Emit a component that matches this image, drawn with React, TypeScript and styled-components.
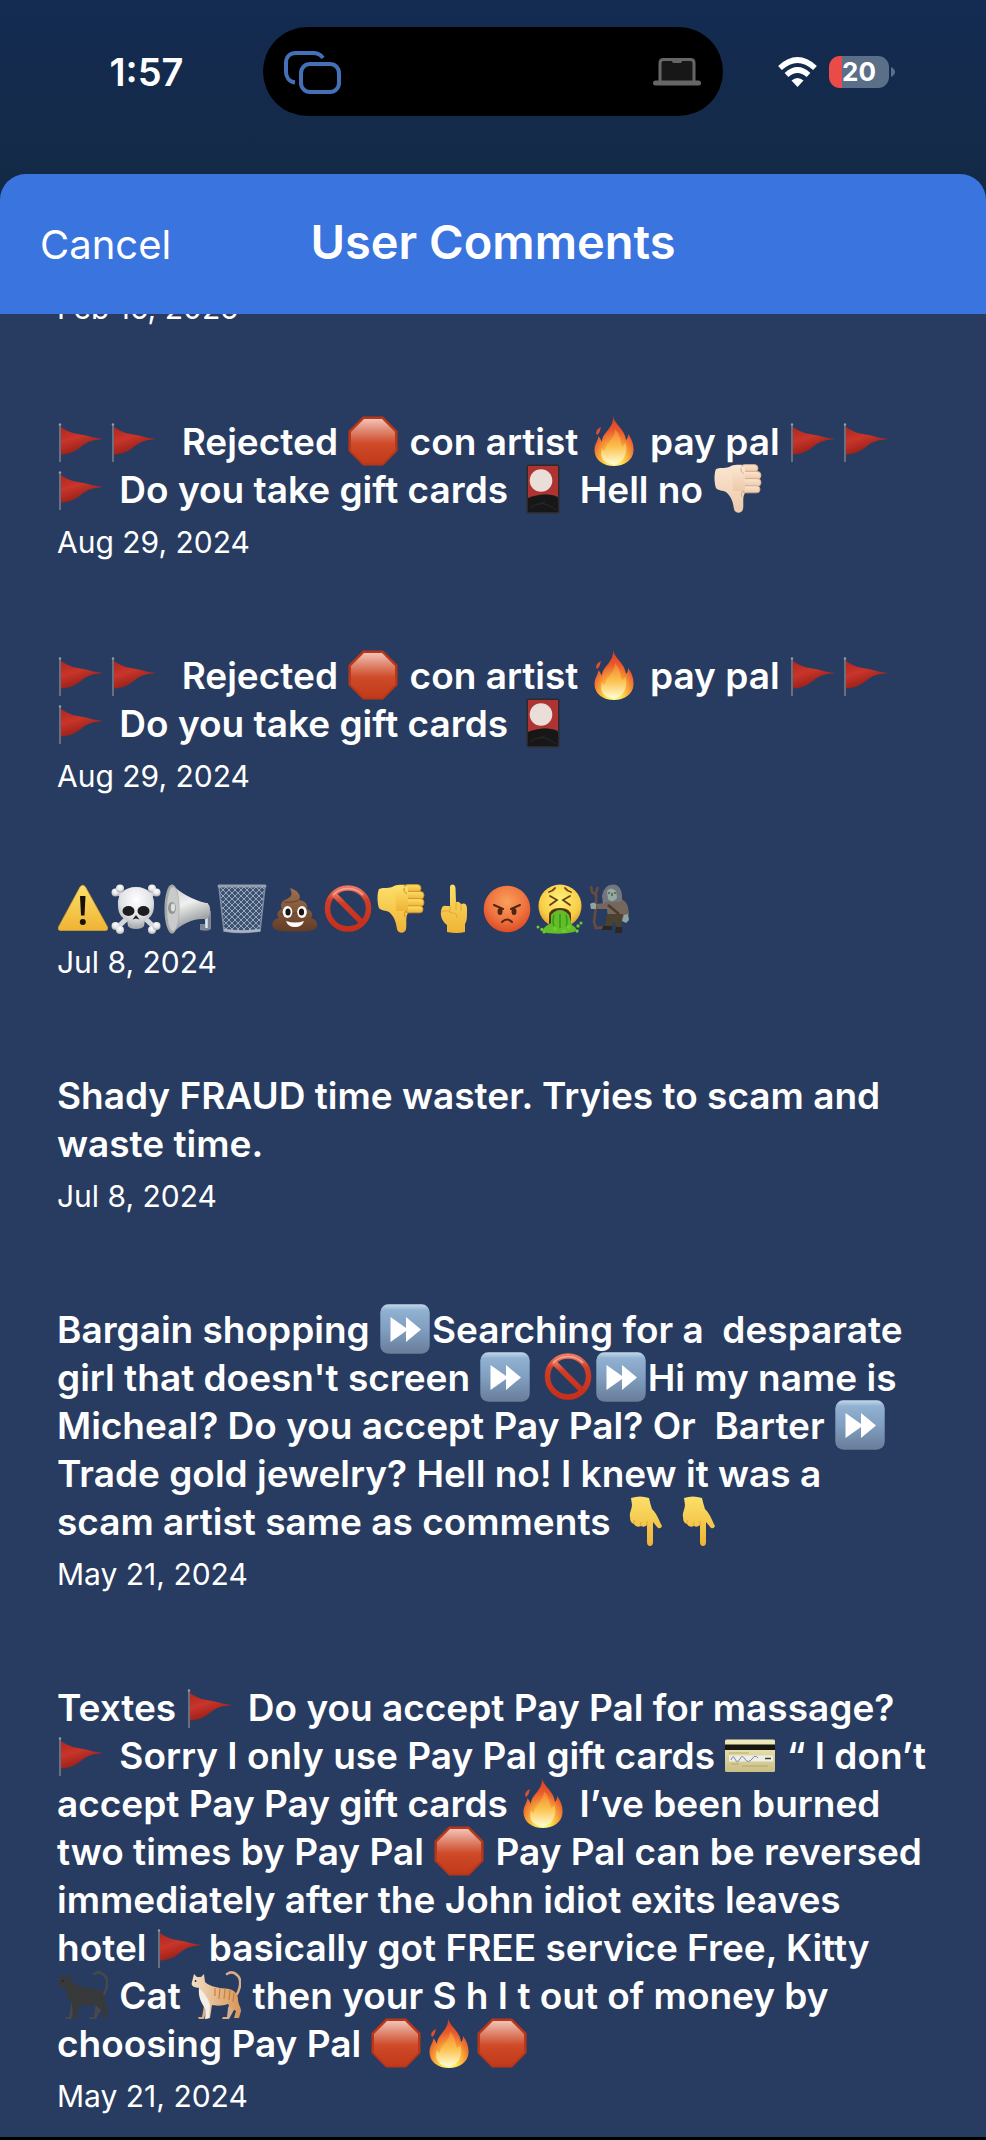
import React from "react";
import styled, { createGlobalStyle } from "styled-components";

const GlobalStyle = createGlobalStyle`
  *, *::before, *::after { box-sizing: border-box; }
  body {
    margin: 0;
    background: #283c61;
    color: #fff;
    font-family: Inter, "Liberation Sans", sans-serif;
  }
`;

const Screen = styled.div`
  display: flex;
  flex-direction: column;
  min-height: 100vh;
  background: linear-gradient(#142b52, #132a47 173px);
  border-bottom: 3px solid #000;
`;

const StatusBar = styled.div`
  display: grid;
  grid-template-columns: 1fr auto 1fr;
  padding: 27px 0 58px;
`;

const Time = styled.time`
  align-self: center;
  justify-self: center;
  padding-left: 30px;
  font-size: 38px;
  font-weight: 600;
  line-height: 48px;
`;

const Island = styled.div`
  display: flex;
  align-items: center;
  justify-content: space-between;
  width: 460px;
  height: 89px;
  padding: 0 22px 0 20px;
  border-radius: 45px;
  background: #000;
`;

const Indicators = styled.div`
  display: flex;
  align-items: center;
  gap: 12px;
  padding-left: 55px;
`;

const Battery = styled.div`
  display: flex;
  align-items: center;
  gap: 2px;
`;

const BatteryBody = styled.div`
  width: 60px;
  height: 32px;
  border-radius: 11px;
  background: linear-gradient(90deg, #ea4b48 13px, #5c6f89 13px);
  font-size: 26px;
  font-weight: 700;
  line-height: 32px;
  text-align: center;
`;

const Sheet = styled.main`
  display: flex;
  flex: 1;
  flex-direction: column;
  overflow: hidden;
  border-radius: 26px 26px 0 0;
  background: #283c61;
`;

const Header = styled.header`
  position: relative;
  z-index: 1;
  display: grid;
  grid-template-columns: 1fr auto 1fr;
  align-items: baseline;
  height: 140px;
  padding: 36px 40px 0;
  background: #3a74df;
`;

const CancelButton = styled.button`
  justify-self: start;
  padding: 0;
  border: 0;
  background: none;
  color: #fff;
  font: 400 40px/60px Inter, "Liberation Sans", sans-serif;
  cursor: pointer;
`;

const Title = styled.h1`
  margin: 0;
  font-size: 47px;
  font-weight: 600;
  line-height: 64px;
`;

const CommentList = styled.ul`
  margin: -26px 0 0;
  padding: 0 57px;
  list-style: none;
`;

const CommentItem = styled.li`
  padding-bottom: 90px;

  &:last-child {
    padding-bottom: 20px;
  }
`;

const CommentText = styled.p`
  margin: 0 0 8px;
  font-size: 37px;
  font-weight: 600;
  line-height: 48px;
  white-space: pre-wrap;
`;

const CommentDate = styled.time`
  display: block;
  font-size: 30px;
  line-height: 40px;
`;

const Glyph = styled.svg`
  width: 50px;
  height: 50px;
  margin: -6px 2px -6px 1px;
  vertical-align: -5px;
`;

const SharedDefs = styled.svg`
  position: absolute;
  width: 0;
  height: 0;
`;

const Gradients = () => (
  <SharedDefs aria-hidden="true">
    <defs>
      <linearGradient id="flag" x1="0" y1="0" x2="0.5" y2="1">
        <stop offset="0" stopColor="#b3261d" />
        <stop offset="0.45" stopColor="#c8352b" />
        <stop offset="1" stopColor="#8f1b13" />
      </linearGradient>
      <linearGradient id="stop" x1="0" y1="0" x2="0" y2="1">
        <stop offset="0" stopColor="#f2c3b7" />
        <stop offset="0.25" stopColor="#e08a73" />
        <stop offset="0.55" stopColor="#ce4a28" />
        <stop offset="1" stopColor="#c23a1a" />
      </linearGradient>
      <radialGradient id="fire" cx="0.5" cy="0.92" r="0.9">
        <stop offset="0" stopColor="#fffbc8" />
        <stop offset="0.2" stopColor="#fde84f" />
        <stop offset="0.42" stopColor="#f9a83a" />
        <stop offset="0.7" stopColor="#ea5a2c" />
        <stop offset="1" stopColor="#d83c25" />
      </radialGradient>
      <linearGradient id="core" x1="0" y1="0" x2="0" y2="1">
        <stop offset="0" stopColor="#f48b35" stopOpacity="0.7" />
        <stop offset="0.5" stopColor="#fbc04c" />
        <stop offset="1" stopColor="#fffcd0" />
      </linearGradient>
      <linearGradient id="yellow" x1="0" y1="0" x2="0" y2="1">
        <stop offset="0" stopColor="#fce06a" />
        <stop offset="1" stopColor="#efb334" />
      </linearGradient>
      <linearGradient id="light" x1="0" y1="0" x2="0" y2="1">
        <stop offset="0" stopColor="#fbe6d0" />
        <stop offset="1" stopColor="#ecc9aa" />
      </linearGradient>
      <radialGradient id="bone" cx="0.5" cy="0.3" r="0.7">
        <stop offset="0" stopColor="#ffffff" />
        <stop offset="0.6" stopColor="#e2e3e6" />
        <stop offset="1" stopColor="#a5a8ae" />
      </radialGradient>
      <linearGradient id="horn" x1="0" y1="0" x2="0.3" y2="1">
        <stop offset="0" stopColor="#c6c7c8" />
        <stop offset="0.45" stopColor="#f0f0f0" />
        <stop offset="1" stopColor="#85878a" />
      </linearGradient>
      <linearGradient id="poop" x1="0" y1="0" x2="0" y2="1">
        <stop offset="0" stopColor="#a0714f" />
        <stop offset="1" stopColor="#633c25" />
      </linearGradient>
      <linearGradient id="ban" x1="0" y1="0" x2="0" y2="1">
        <stop offset="0" stopColor="#f0765f" />
        <stop offset="0.3" stopColor="#cf3d26" />
        <stop offset="1" stopColor="#c92f1a" />
      </linearGradient>
      <radialGradient id="angry" cx="0.5" cy="0.35" r="0.65">
        <stop offset="0" stopColor="#f9a05a" />
        <stop offset="0.6" stopColor="#ef7440" />
        <stop offset="1" stopColor="#de4c24" />
      </radialGradient>
      <radialGradient id="face" cx="0.5" cy="0.35" r="0.65">
        <stop offset="0" stopColor="#fff07a" />
        <stop offset="0.7" stopColor="#f8ce45" />
        <stop offset="1" stopColor="#e5a02b" />
      </radialGradient>
      <linearGradient id="forward" x1="0" y1="0" x2="0" y2="1">
        <stop offset="0" stopColor="#c3d8ea" />
        <stop offset="0.12" stopColor="#91b1d1" />
        <stop offset="0.5" stopColor="#819fc1" />
        <stop offset="1" stopColor="#687d99" />
      </linearGradient>
      <linearGradient id="card" x1="0" y1="0" x2="0" y2="1">
        <stop offset="0" stopColor="#f1ecbd" />
        <stop offset="1" stopColor="#cabf83" />
      </linearGradient>
      <linearGradient id="ginger" x1="0" y1="0" x2="1" y2="0">
        <stop offset="0" stopColor="#f2dfca" />
        <stop offset="0.5" stopColor="#e6b98a" />
        <stop offset="1" stopColor="#d99557" />
      </linearGradient>
      <pattern id="mesh" width="6" height="6" patternUnits="userSpaceOnUse">
        <path d="M0 0L6 6M6 0L0 6" stroke="#9fb2c9" strokeWidth="0.9" />
      </pattern>
    </defs>
  </SharedDefs>
);

const ThumbDown = ({ fill, shade }: { fill: string; shade: string }) => (
  <g fill={`url(#${fill})`}>
    <path d="M3 5C8 3 13 5 18 2C24 0 30 1 34 2L38 27L32 29C29 33 31 40 30 45C29 50 22 50 21 45C20 39 19 33 13 28C10 26 5 27 3 24C1 19 1 9 3 5Z" />
    <g stroke={shade} strokeWidth="0.9">
      <rect x="28" y="0.6" width="17" height="7.4" rx="3.7" />
      <rect x="28" y="7.4" width="20" height="7.8" rx="3.9" />
      <rect x="28" y="14.6" width="20" height="7.8" rx="3.9" />
      <rect x="29" y="21.8" width="18" height="7" rx="3.5" />
    </g>
    <path d="M19 3H32V27H20Z" />
    <path d="M31 10Q27 8 28 4M31 27Q27 28 29 33" fill="none" stroke={shade} />
  </g>
);

const CatShape = ({ body, back }: { body: string; back: string }) => (
  <>
    <path d="M44 27C50 19 51 9 46 5C43 2 39 2 36 4" fill="none" stroke={back} strokeWidth="2.6" strokeLinecap="round" />
    <path d="M14 30L11 47H7L8 49H13L18 33ZM40 30L37 38L36 47H32L31 49H38L44 38Z" fill={back} />
    <path d="M3 4L6 7H10L13 4L14 12C19 17 29 18 38 19C43 20 47 24 47 29C47 34 50 37 50 41L48 48H43L45 41C42 39 39 37 37 34C32 36 25 36 21 35L19 48L14 49L15 47L14 33C9 29 8 23 8 18L3 17C1 16 0 14 1 12Z" fill={body} />
    <circle cx="4.6" cy="11" r="0.9" fill="#222" />
  </>
);

const EMOJI: Record<string, { label: string; art: React.ReactNode }> = {
  "🚩": {
    label: "red flag",
    art: (
      <>
        <path d="M3 11C12 18 22 18 30 20C36 22 40 22 45 23C36 24 30 25 24 30C17 36 11 38 3 38.5Z" fill="url(#flag)" />
        <path d="M2 8.5V46" stroke="#83858c" strokeWidth="1.4" />
        <circle cx="2" cy="8.5" r="1.2" fill="#9b9ca2" />
      </>
    ),
  },
  "🛑": {
    label: "stop sign",
    art: (
      <>
        <path d="M15 0.5H35L49.5 15V35L35 49.5H15L0.5 35V15Z" fill="#b93619" />
        <path d="M16 3H34L47 16V34.5L34.5 47.5H15.5L3 34.5V16Z" fill="url(#stop)" />
      </>
    ),
  },
  "🔥": {
    label: "fire",
    art: (
      <>
        <path d="M24 0C25 8 36 13 37 24C39 22 39 20 39 18C43 23 45 29 44.5 35C44 44 35 50 25 50C14 50 5.5 44 5.5 34C5.5 28 9 25 9.5 20C11 22 12 24 13 26C13 16 25 13 24 0Z" fill="url(#fire)" />
        <path d="M8 19C6 16 8 13 12 11C11 14 11 17 8 19Z" fill="#e0502d" />
        <path d="M26 13C32 20 31 26 33 30C35 29 36 28 36 26C40 36 34 48 25 48C15 48 10 41 13 32C14 34 15 34 16 35C16 27 26 24 26 13Z" fill="url(#core)" />
      </>
    ),
  },
  "🎴": {
    label: "flower playing cards",
    art: (
      <>
        <rect x="8.5" y="0.5" width="33" height="49" rx="2" fill="#2e292b" />
        <path d="M10 2H40V33C29 28 21 32 10 34Z" fill="#ad3432" />
        <circle cx="23" cy="16.5" r="11.3" fill="#e9dfd8" />
        <path d="M10 34C21 30 31 29 40 34V48H10Z" fill="#171718" />
        <path d="M12 44Q24 34 38 46M22 40L27 38" fill="none" stroke="#28292a" />
      </>
    ),
  },
  "👎🏻": { label: "thumbs down, light skin tone", art: <ThumbDown fill="light" shade="#d3aa8a" /> },
  "👎": { label: "thumbs down", art: <ThumbDown fill="yellow" shade="#cf8f26" /> },
  "⚠️": {
    label: "warning",
    art: (
      <>
        <path d="M22 3Q24.8 -0.5 27.5 3L49.5 43Q50.5 46.5 47 46.5H3Q-0.5 46.5 0.5 43Z" fill="url(#yellow)" stroke="#d9a62b" strokeWidth="0.7" />
        <path d="M22 12H27.5L26.5 31.5H23Z" fill="#17130a" />
        <circle cx="24.8" cy="38" r="3" fill="#17130a" />
      </>
    ),
  },
  "☠️": {
    label: "skull and crossbones",
    art: (
      <>
        <g stroke="#d5d7db" strokeWidth="5" strokeLinecap="round">
          <path d="M6 7L44 44M44 7L6 44" />
        </g>
        <g fill="url(#bone)">
          <circle cx="4.5" cy="8.5" r="4" /><circle cx="9" cy="4.5" r="4" />
          <circle cx="41" cy="4.5" r="4" /><circle cx="45.5" cy="8.5" r="4" />
          <circle cx="4.5" cy="42" r="4" /><circle cx="9" cy="46" r="4" />
          <circle cx="41" cy="46" r="4" /><circle cx="45.5" cy="42" r="4" />
          <path d="M25 3C37 3 44 11 43 21C43 29 40 34 34 36L33 42C31 46 19 46 17 42L16 36C10 34 7 29 7 21C6 11 13 3 25 3Z" />
        </g>
        <ellipse cx="17.5" cy="27" rx="6" ry="5" fill="#1d1d20" />
        <ellipse cx="32.5" cy="27" rx="6" ry="5" fill="#1d1d20" />
        <path d="M25 31L28.5 35.5L25 34.5L21.5 35.5Z" fill="#1d1d20" />
        <path d="M20 40V44M25 41V45M30 40V44" stroke="#a6a8ad" />
      </>
    ),
  },
  "📢": {
    label: "loudspeaker",
    art: (
      <>
        <path d="M34 27H47V45Q44 48 36 46V40H41V34H34Z" fill="#7d8794" />
        <path d="M42.5 19V44" stroke="#d8e9f7" strokeWidth="2.5" />
        <path d="M8 0.5C16 9 29 16 42 19Q47 20 46 29Q45 36 40 35C30 34 17 40 8 49.5Z" fill="url(#horn)" />
        <ellipse cx="8" cy="25" rx="7.5" ry="24.5" fill="#a6a7a8" />
        <ellipse cx="9" cy="25" rx="6" ry="22" fill="#c9caca" />
        <ellipse cx="8" cy="24" rx="4" ry="6" fill="#929394" />
        <ellipse cx="9" cy="23.5" rx="2.2" ry="4" fill="#dedede" />
      </>
    ),
  },
  "🗑️": {
    label: "wastebasket",
    art: (
      <>
        <path d="M2 3H48L43 48H7Z" fill="#3f5370" />
        <path d="M2 3H48L43 48H7Z" fill="url(#mesh)" />
        <path d="M2 3L7 47Q25 50 43 47L48 3" fill="none" stroke="#7c8ba0" strokeWidth="1.5" />
        <rect x="0.5" y="0.5" width="49" height="3" rx="1.5" fill="#95a1b0" />
        <path d="M7 46Q25 49 43 46" fill="none" stroke="#a9b3c1" strokeWidth="2.5" />
      </>
    ),
  },
  "💩": {
    label: "pile of poo",
    art: (
      <>
        <path d="M20 4C27 6 32 11 29 16C36 17 38 21 37 25C43 27 43 32 41 34C49 36 49 45 43 46C34 48 16 48 7 46C0 44 1 35 9 34C5 30 9 26 12 25C9 20 13 16 17 15C23 12 22 9 20 4Z" fill="url(#poop)" />
        <path d="M14 18Q24 19 29 16M10 30Q26 31 37 25" fill="none" stroke="#62402b" />
        <ellipse cx="17.5" cy="28" rx="4.8" ry="6" fill="#fff" />
        <ellipse cx="32" cy="28" rx="4.8" ry="6" fill="#fff" />
        <ellipse cx="18" cy="28" rx="2.6" ry="3.6" fill="#1b1512" />
        <ellipse cx="31.5" cy="28" rx="2.6" ry="3.6" fill="#1b1512" />
        <path d="M16 37Q25 40 34 37Q32 43 25 43Q18 43 16 37Z" fill="#fff" />
      </>
    ),
  },
  "🚫": {
    label: "prohibited",
    art: (
      <>
        <g fill="none" stroke="url(#ban)" strokeWidth="5.5">
          <circle cx="25" cy="24.5" r="20.5" />
          <path d="M10.5 10L39.5 39" />
        </g>
        <path d="M10 11A20.5 20.5 0 0 1 40 11" fill="none" stroke="#f5a496" strokeWidth="1.6" />
      </>
    ),
  },
  "🖕": {
    label: "middle finger",
    art: (
      <>
        <path d="M21 22V3Q21 0.5 23.5 0.5Q26 0.5 26.5 4L27 18Q30 17 32 20Q38 18 38 25C38 34 38 37 36 40V48Q28 50 18 48V41C14 38 11 33 12 27Q13 21 17 22Z" fill="url(#yellow)" />
        <path d="M21 22V28M27 18V26M32 20V27M12 28Q18 25 22 29Q28 28 28 34" fill="none" stroke="#d9a038" strokeWidth="0.8" />
      </>
    ),
  },
  "😡": {
    label: "angry face",
    art: (
      <>
        <circle cx="25" cy="25" r="23.3" fill="url(#angry)" />
        <path d="M12 21L21 25M38 21L29 25" stroke="#512414" strokeWidth="2" strokeLinecap="round" />
        <ellipse cx="18" cy="27.5" rx="2.5" ry="3.5" fill="#512414" />
        <ellipse cx="32" cy="27.5" rx="2.5" ry="3.5" fill="#512414" />
        <path d="M20 38Q25 33 30 38" fill="none" stroke="#512414" strokeWidth="2" strokeLinecap="round" />
      </>
    ),
  },
  "🤮": {
    label: "vomiting face",
    art: (
      <>
        <circle cx="25" cy="22" r="21.5" fill="url(#face)" />
        <g fill="none" stroke="#664018" strokeWidth="1.8" strokeLinecap="round">
          <path d="M14 8Q18 7 20 4M36 8Q32 7 30 4M15 12L22 16L15 21M35 12L28 16L35 21" />
        </g>
        <path d="M14 32Q14 24 25 24Q36 24 36 32V40H14Z" fill="#553414" />
        <path d="M16 31Q25 21 34 31L37 41Q44 45 39 48Q27 51 12 49Q5 47 11 42L16 39Z" fill="#61bd28" />
        <path d="M19 31Q17 38 19 42M25 30V44M31 31Q33 38 31 42" stroke="#3d951c" fill="none" strokeWidth="1.5" />
        <g fill="#70cc2f">
          <circle cx="3" cy="43" r="1.5" /><circle cx="7" cy="45.5" r="1.7" />
          <circle cx="46" cy="39" r="1.5" /><circle cx="43" cy="42" r="1.7" />
          <circle cx="9" cy="48" r="1.5" /><circle cx="42" cy="47" r="1.7" />
          <circle cx="20" cy="45" r="2" /><circle cx="29" cy="47" r="2" /><circle cx="34" cy="43" r="2" />
        </g>
      </>
    ),
  },
  "🧌": {
    label: "troll",
    art: (
      <>
        <path d="M3 2L4 8L8 11V22L6 38L8 44L19 43M10 3L7 11" fill="none" stroke="#674b3d" strokeWidth="2.6" />
        <path d="M17 19Q24 12 35 16Q40 18 41 30L37 34L35 37H20L19 25L9 25L8 20Z" fill="#75675c" />
        <path d="M14 12Q16 0 26 0.5Q35 2 34 17L30 18H19L15 20Z" fill="#74767d" />
        <path d="M19 7Q23 2 28 7L29 14Q25 20 20 15Z" fill="#94aaa1" />
        <path d="M20 9H22M26 9H28M24 9V12" stroke="#2d3334" />
        <path d="M19 30H35L33 43H29L26 38L23 43H17Z" fill="#4a4131" />
        <path d="M15 42H24V46H14ZM28 43H34V49H27Z" fill="#2d2522" />
        <path d="M2 20Q6 17 8 20V25H3ZM36 31L40 30L41 36L38 39L34 37Z" fill="#8fa5a5" />
        <path d="M20 21L31 30" stroke="#4e3a2c" strokeWidth="2.5" />
      </>
    ),
  },
  "⏩": {
    label: "fast-forward",
    art: (
      <>
        <rect x="0.3" y="0.3" width="49.4" height="49.4" rx="8" fill="url(#forward)" />
        <path d="M10.5 13L26 24V13L41 25.5L26 38V27L10.5 38Z" fill="#fff" />
      </>
    ),
  },
  "👇": {
    label: "pointing down",
    art: (
      <>
        <path d="M10 2Q19 -1 28 2Q29 7 31 13C37 19 38 25 41 30Q40 33 37 32L32 26V46Q32 50 29 50Q26 50 26 46V29Q23 32 20 30Q15 32 13 28Q9 27 9 21C8 17 11 13 11 9Z" fill="url(#yellow)" />
        <path d="M26 30V25M20 30Q19 28 20 26M13 28Q12 26 14 24" fill="none" stroke="#d9a038" strokeWidth="0.8" />
      </>
    ),
  },
  "💳": {
    label: "credit card",
    art: (
      <>
        <rect y="9.5" width="50" height="32.5" rx="1.5" fill="url(#card)" />
        <path d="M0 14.5H50V20H0Z" fill="#171710" />
        <path d="M4 25.5H48V31.5H4Z" fill="#f0eee4" />
        <path d="M6 30Q8 24 10 29T15 29Q17 24 20 29T27 29Q30 24 33 28" fill="none" stroke="#7187bd" />
        <path d="M40 28.5H46" stroke="#3d3d36" strokeWidth="1.5" />
        <path d="M4 23H24M6 34H14M17 36H43" stroke="#aaa06c" strokeWidth="0.8" />
      </>
    ),
  },
  "🐈‍⬛": { label: "black cat", art: <CatShape body="#38393b" back="#47484b" /> },
  "🐈": {
    label: "cat",
    art: (
      <>
        <CatShape body="url(#ginger)" back="#d6ad88" />
        <path d="M24 18V26M29 18L28 29M34 19L33 29M39 20L38 30M43 23L42 32" stroke="#c97e43" strokeWidth="1.2" />
        <path d="M8 18C12 22 18 29 19 35L18 48L14 49L15 40C10 32 7 27 8 18Z" fill="#f2efe9" />
      </>
    ),
  },
};

const emojiPattern = new RegExp(
  `(${Object.keys(EMOJI).sort((a, b) => b.length - a.length).join("|")})`,
);

const RichText = ({ text }: { text: string }) => (
  <>
    {text.split(emojiPattern).map((part, i) => {
      const emoji = EMOJI[part];
      if (!emoji) return part;
      return (
        <Glyph key={i} viewBox="0 0 50 50" role="img" aria-label={emoji.label}>
          {emoji.art}
        </Glyph>
      );
    })}
  </>
);

const comments = [
  { date: "Feb 16, 2025", iso: "2025-02-16" },
  {
    text: "🚩🚩  Rejected 🛑 con artist 🔥 pay pal 🚩🚩🚩 Do you take gift cards 🎴 Hell no 👎🏻",
    date: "Aug 29, 2024",
    iso: "2024-08-29",
  },
  {
    text: "🚩🚩  Rejected 🛑 con artist 🔥 pay pal 🚩🚩🚩 Do you take gift cards 🎴",
    date: "Aug 29, 2024",
    iso: "2024-08-29",
  },
  { text: "⚠️☠️📢🗑️💩🚫👎🖕😡🤮🧌", date: "Jul 8, 2024", iso: "2024-07-08" },
  {
    text: "Shady FRAUD time waster. Tryies to scam and waste time.",
    date: "Jul 8, 2024",
    iso: "2024-07-08",
  },
  {
    text: "Bargain shopping ⏩Searching for a  desparate girl that doesn't screen ⏩ 🚫⏩Hi my name is Micheal? Do you accept Pay Pal? Or  Barter ⏩ Trade gold jewelry? Hell no! I knew it was a scam\u00a0artist same as comments 👇👇",
    date: "May 21, 2024",
    iso: "2024-05-21",
  },
  {
    text: "Textes 🚩 Do you accept Pay Pal for massage? 🚩 Sorry I only use Pay Pal gift cards 💳 “ I don’t accept Pay Pay gift cards 🔥 I’ve been burned two times by Pay Pal 🛑 Pay Pal can be reversed immediately after the John idiot exits leaves hotel 🚩basically got FREE service Free, Kitty 🐈‍⬛ Cat 🐈 then your S h I t out of money by choosing Pay Pal 🛑🔥🛑",
    date: "May 21, 2024",
    iso: "2024-05-21",
  },
];

const ShareIcon = () => (
  <svg width="60" height="46" viewBox="0 0 60 46" fill="none" stroke="#4470b8" strokeWidth="4" aria-hidden="true">
    <rect x="18" y="15" width="38" height="28" rx="9" />
    <path d="M12 33.5C6 32.5 3 28 3 23V14C3 8 7 4 13 4H30C35 4 38 6 40 9" />
  </svg>
);

const LaptopIcon = () => (
  <svg width="48" height="30" viewBox="0 0 48 30" aria-hidden="true">
    <path d="M7 24V6Q7 2.5 10.5 2.5H37.5Q41 2.5 41 6V24" fill="#171718" stroke="#666668" strokeWidth="3" />
    <path d="M19 2H29V4Q29 6 27 6H21Q19 6 19 4Z" fill="#666668" />
    <rect y="23.5" width="48" height="5" rx="2.5" fill="#666668" />
  </svg>
);

const WifiIcon = () => (
  <svg width="39" height="30" viewBox="0 0 39 30" aria-hidden="true">
    <g fill="none" stroke="#fff" strokeWidth="5.5">
      <path d="M2 11Q19.5 -5 37 11" />
      <path d="M8.5 18Q19.5 8 30.5 18" />
    </g>
    <path d="M13.5 23.5Q19.5 18.5 25.5 23.5L19.5 30Z" fill="#fff" />
  </svg>
);

export default function App() {
  return (
    <Screen>
      <GlobalStyle />
      <Gradients />
      <StatusBar>
        <Time dateTime="13:57">1:57</Time>
        <Island>
          <ShareIcon />
          <LaptopIcon />
        </Island>
        <Indicators>
          <WifiIcon />
          <Battery>
            <BatteryBody>20</BatteryBody>
            <svg width="4" height="10" viewBox="0 0 4 10" aria-hidden="true">
              <path d="M0 0Q4 2 4 5T0 10Z" fill="#5c6f89" />
            </svg>
          </Battery>
        </Indicators>
      </StatusBar>
      <Sheet>
        <Header>
          <CancelButton type="button">Cancel</CancelButton>
          <Title>User Comments</Title>
        </Header>
        <CommentList>
          {comments.map((comment, i) => (
            <CommentItem key={i}>
              {comment.text && (
                <CommentText>
                  <RichText text={comment.text} />
                </CommentText>
              )}
              <CommentDate dateTime={comment.iso}>{comment.date}</CommentDate>
            </CommentItem>
          ))}
        </CommentList>
      </Sheet>
    </Screen>
  );
}
